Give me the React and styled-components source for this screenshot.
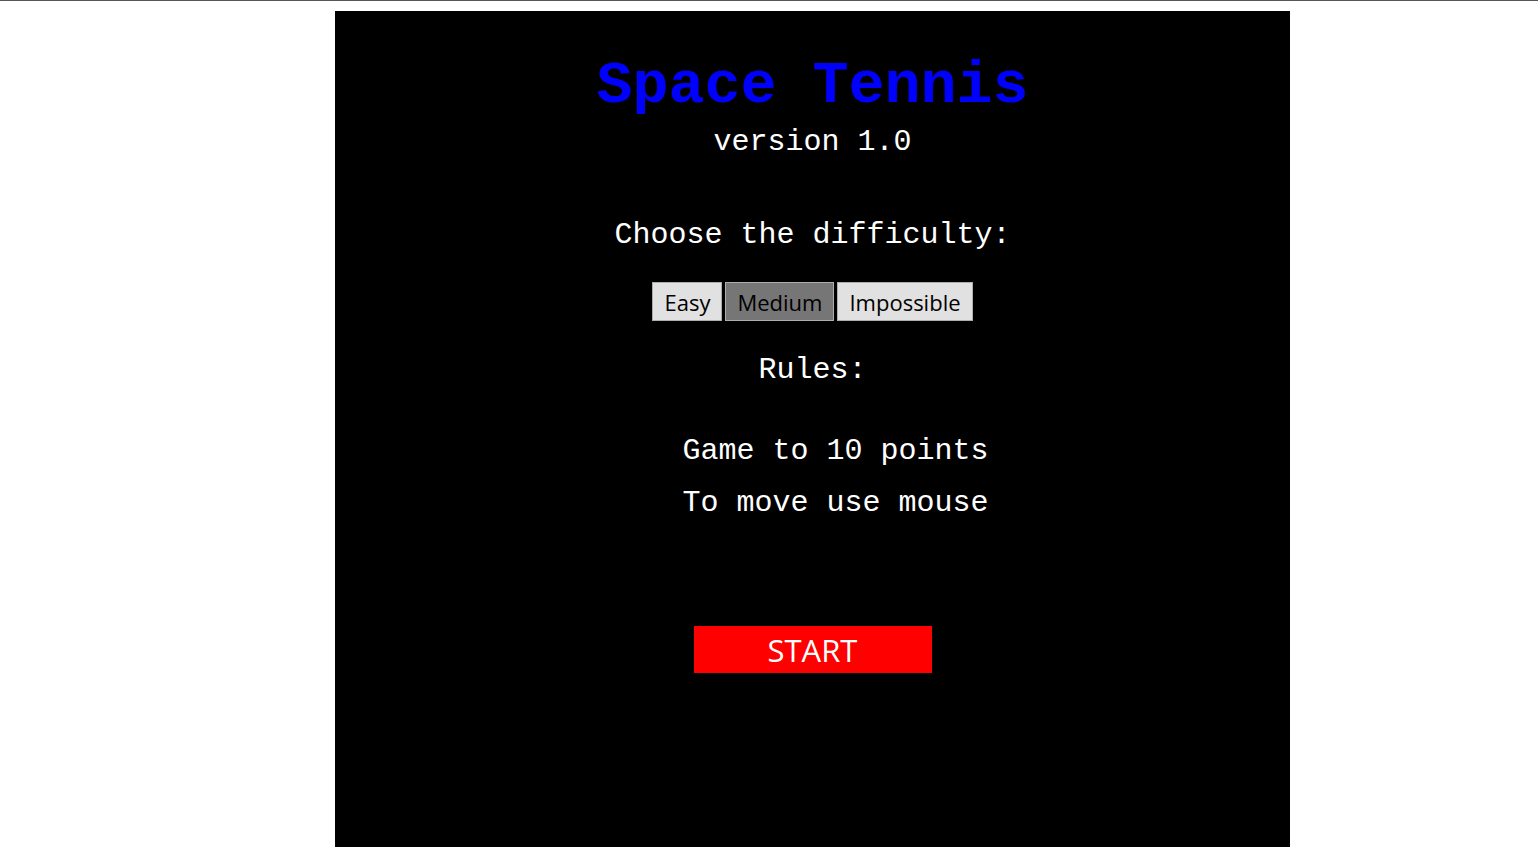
import React, { useState } from 'react'
import styled, { createGlobalStyle } from 'styled-components'

const GlobalStyle = createGlobalStyle`
  html, body {
    margin: 0;
    padding: 0;
    background: #ffffff;
  }
  body {
    border-top: 1px solid #555555;
  }
`

const Page = styled.div`
  padding: 10px 0 20px 335px;
`

const Board = styled.div`
  width: 955px;
  height: 836px;
  background: #000000;
  padding-top: 41px;
  box-sizing: border-box;
  display: flex;
  flex-direction: column;
  align-items: center;
  font-family: 'Liberation Mono', 'Courier New', monospace;
  color: #ffffff;
`

const Title = styled.h1`
  margin: 0;
  font-size: 60px;
  line-height: 68px;
  font-weight: bold;
  color: #0000ff;
`

const Text = styled.p`
  margin: ${p => p.$top || 0}px 0 0;
  font-size: 30px;
  line-height: 34px;
  color: #ffffff;
`

const Levels = styled.div`
  margin-top: 30px;
  display: flex;
  gap: 3px;
`

const Level = styled.button`
  height: 39px;
  padding: 0 11px;
  border: 1px solid #adadad;
  background: ${p => (p.$active ? '#767676' : '#e1e1e1')};
  color: #000000;
  font-family: 'Open Sans', sans-serif;
  font-size: 22px;
  cursor: pointer;
`

const Rules = styled.ul`
  margin: 47px 0 0;
  padding: 0 0 0 46px;
  list-style: none;
  display: flex;
  flex-direction: column;
  gap: 18px;
  text-align: center;
  font-size: 30px;
  line-height: 34px;
`

const Start = styled.button`
  margin-top: 106px;
  width: 238px;
  height: 47px;
  border: none;
  background: #ff0000;
  color: #ffffff;
  font-family: 'Open Sans', sans-serif;
  font-size: 31px;
  cursor: pointer;
`

const levels = ['Easy', 'Medium', 'Impossible']

const App = () => {
  const [level, setLevel] = useState('Medium')

  return (
    <Page>
      <GlobalStyle />
      <Board>
        <Title>Space Tennis</Title>
        <Text $top={5}>version 1.0</Text>
        <Text $top={59}>Choose the difficulty:</Text>
        <Levels>
          {levels.map(l => (
            <Level key={l} $active={l === level} onClick={() => setLevel(l)}>
              {l}
            </Level>
          ))}
        </Levels>
        <Text $top={32}>Rules:</Text>
        <Rules>
          <li>Game to 10 points</li>
          <li>To move use mouse</li>
        </Rules>
        <Start>START</Start>
      </Board>
    </Page>
  )
}

export default App
